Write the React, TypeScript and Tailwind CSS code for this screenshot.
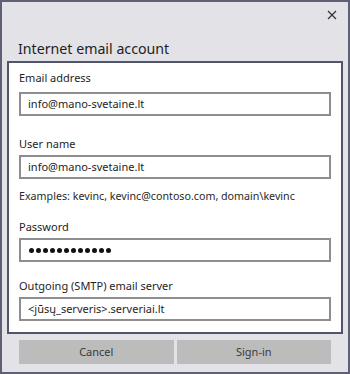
import React from 'react';

const FONT = { fontFamily: '"Noto Sans", "Open Sans", sans-serif' };

function Field({ value, children }: { value?: string; children?: React.ReactNode }) {
    return (
        <div className="h-[24px] border-2 border-[#8e8e8e] bg-white flex items-center pl-[7px] text-[11px] text-[#1e1e1e]">
            {children ?? value}
        </div>
    );
}

function Dots({ count }: { count: number }) {
    return (
        <div className="flex gap-[2px] pl-[1px]">
            {Array.from({ length: count }).map((_, i) => (
                <span key={i} className="w-[5px] h-[5px] rounded-full bg-[#111]" />
            ))}
        </div>
    );
}

export default function App() {
    return (
        <div
            className="w-[350px] h-[374px] border-2 border-[#5e6175] bg-[#e3e3e7] flex flex-col text-[#1e1e1e]"
            style={FONT}
        >
            <div className="h-[24px] flex justify-end items-start pr-[11px] pt-[6px]">
                <svg width="10" height="10" viewBox="0 0 10 10" className="mt-[2px]">
                    <path d="M1 1 L9 9 M9 1 L1 9" stroke="#333" strokeWidth="1.2" />
                </svg>
            </div>

            <div className="pl-[16px] pt-[13px] h-[35px] text-[14.2px] leading-[20px] text-[#1e1e1e]">
                Internet email account
            </div>

            <div className="mx-[5px] border-2 border-[#51556a] bg-white px-[10px] pt-[7px] pb-[11px] text-[11px] leading-[16px]">
                <div className="mb-[6px]">Email address</div>
                <Field value="info@mano-svetaine.lt" />

                <div className="mt-[20px] mb-[3px]">User name</div>
                <Field value="info@mano-svetaine.lt" />

                <div className="mt-[9px] text-[10.7px] text-[#2a2a2a]">Examples: kevinc, kevinc@contoso.com, domain\kevinc</div>

                <div className="mt-[15px] mb-[3px]">Password</div>
                <Field>
                    <Dots count={12} />
                </Field>

                <div className="mt-[16px] mb-[3px]">Outgoing (SMTP) email server</div>
                <Field value="<jūsų_serveris>.serveriai.lt" />
            </div>

            <div className="flex gap-[3px] px-[17px] mt-[6px]">
                <div className="flex-1 h-[24px] bg-[#bcbcbc] flex items-center justify-center text-[11px] text-[#3a3a3a]">
                    Cancel
                </div>
                <div className="flex-1 h-[24px] bg-[#bcbcbc] flex items-center justify-center text-[11px] text-[#3a3a3a]">
                    Sign-in
                </div>
            </div>
        </div>
    );
}
